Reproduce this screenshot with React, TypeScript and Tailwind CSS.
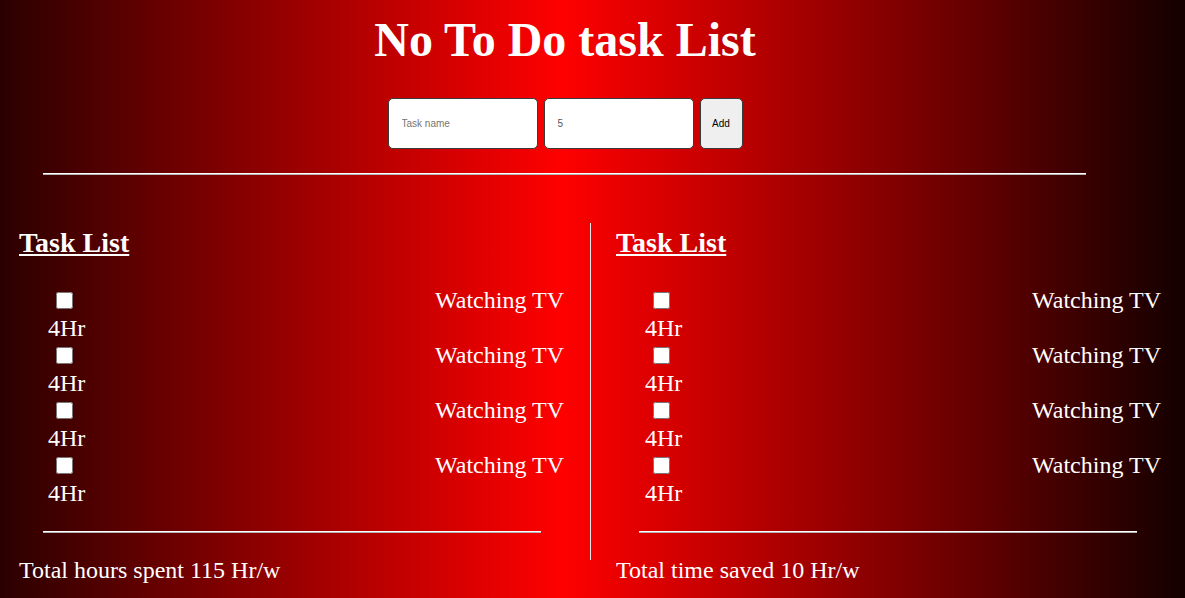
import React from 'react';

const tasks = [
  { id: 1, name: 'Watching TV', hr: 4 },
  { id: 2, name: 'Watching TV', hr: 4 },
  { id: 3, name: 'Watching TV', hr: 4 },
  { id: 4, name: 'Watching TV', hr: 4 },
];

function TaskRows() {
  return (
    <div className="mt-[29px]">
      {tasks.map(t => (
        <div key={t.id} className="text-[24px] leading-[27.5px]">
          <div className="flex items-center justify-between h-[27.5px]">
            <input type="checkbox" className="ml-[8px] w-[17px] h-[17px]" />
            <span>{t.name}</span>
          </div>
          <div>{t.hr}Hr</div>
        </div>
      ))}
    </div>
  );
}

function Divider({ className }: { className: string }) {
  return <div className={"h-0 border-t border-t-white border-b border-b-[#b5b5b5] " + className} />;
}

export default function App() {
  return (
    <div className="min-h-screen text-white font-['Liberation_Serif',serif] bg-[linear-gradient(to_right,#2b0000_0%,#ff0000_47.3%,#140000_100%)]">
      <div className="w-[1130px]">
        <h1 className="pt-[13px] text-[48px] leading-[53px] font-bold text-center">No To Do task List</h1>
        <form className="mt-[32px] flex justify-center gap-[6px] font-['Liberation_Sans',Arial,sans-serif] text-[10px]">
          <input
            type="text"
            placeholder="Task name"
            className="w-[150px] h-[51px] pl-[13px] pr-[12px] bg-white text-[#333] placeholder:text-[#757575] border border-[#3a3a3a] rounded-[5px]"
          />
          <input
            type="number"
            defaultValue={5}
            className="w-[150px] h-[51px] pl-[13px] pr-[12px] bg-white text-[#555] border border-[#3a3a3a] rounded-[5px]"
          />
          <button type="button" className="w-[43px] h-[51px] bg-[#efefef] text-black border border-[#3a3a3a] rounded-[5px]">
            Add
          </button>
        </form>
        <Divider className="mt-[24px] ml-[43px] w-[1043px]" />
      </div>

      <div className="flex mt-[48px]">
        <div className="w-[590px]">
          <h2 className="pl-[19px] mt-[4px] text-[28px] leading-[31px] font-bold underline">Task List</h2>
          <div className="ml-[48px] w-[516px]">
            <TaskRows />
          </div>
          <Divider className="mt-[24px] ml-[43px] w-[498px]" />
          <p className="pl-[19px] mt-[24px] text-[24px] leading-[27.5px]">Total hours spent 115 Hr/w</p>
        </div>
        <div className="w-px h-[337px] bg-[#e8e8e8]" />
        <div className="w-[594px]">
          <h2 className="pl-[25px] mt-[4px] text-[28px] leading-[31px] font-bold underline">Task List</h2>
          <div className="ml-[54px] w-[516px]">
            <TaskRows />
          </div>
          <Divider className="mt-[24px] ml-[48px] w-[498px]" />
          <p className="pl-[25px] mt-[24px] text-[24px] leading-[27.5px]">Total time saved 10 Hr/w</p>
        </div>
      </div>
    </div>
  );
}
